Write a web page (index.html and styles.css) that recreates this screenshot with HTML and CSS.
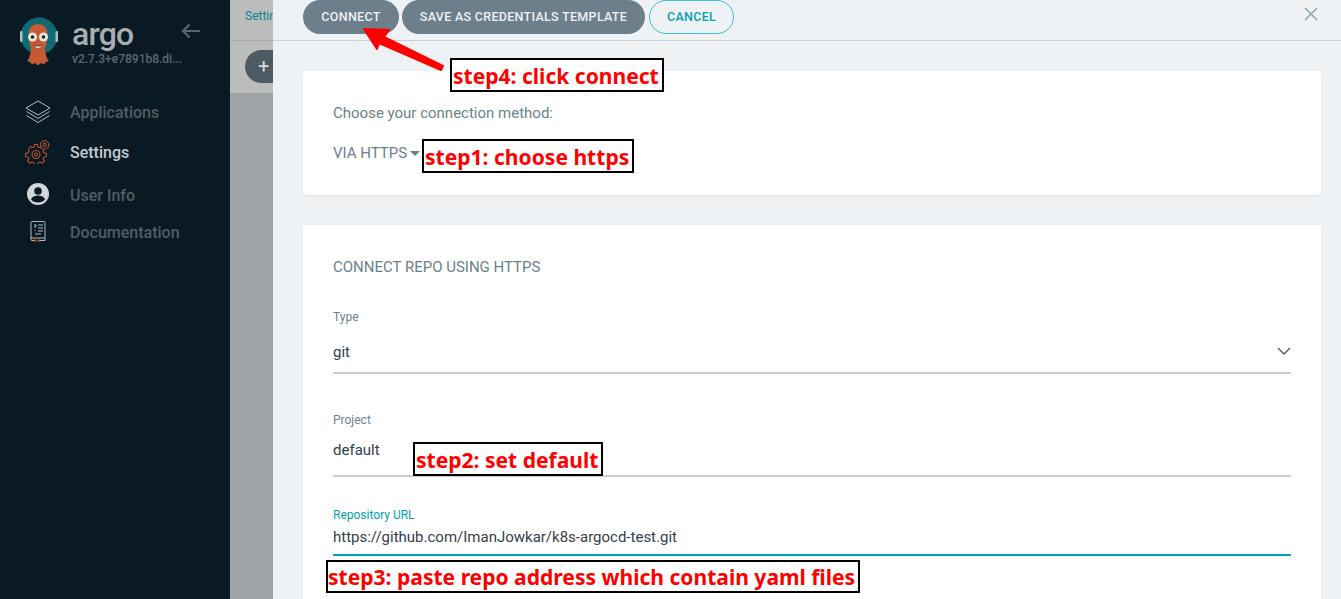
FILE: index.html
```html
<!DOCTYPE html>
<html lang="en">
<head>
<meta charset="utf-8">
<title>Argo CD - Settings</title>
<link rel="stylesheet" href="styles.css">
</head>
<body>
<div class="app">
  <aside class="sidebar">
    <div class="brand">
      <svg class="logo" width="40" height="52" viewBox="0 0 40 52">
        <circle cx="19" cy="19" r="18.500" fill="#0f6a73"/>
        <rect x="0" y="14" width="2.500" height="11" rx="1" fill="#a9c0c6"/>
        <rect x="35.500" y="14" width="2.500" height="11" rx="1" fill="#a9c0c6"/>
        <path d="M8.500 17C8.500 11 12.500 7 18 7s9.500 4 9.500 10c0 6-1.500 11-2.500 15 .5 6 2 10 4 12l-3 1-2 2.500-3-1.500-3 2.500-3-2.500-3 1.500-2-2.500-3-1c2-2 3.500-6 4-12-1-4-2.500-9-2.500-15z" fill="#c65a35"/>
        <circle cx="12.500" cy="20" r="4.500" fill="#e8e6df"/>
        <circle cx="23.500" cy="20" r="4.500" fill="#e8e6df"/>
        <circle cx="12.500" cy="20" r="1.800" fill="#222"/>
        <circle cx="23.500" cy="20" r="1.800" fill="#222"/>
        <path d="M14 28q4 2.500 8 0-1 3.500-4 3.500t-4-3.500z" fill="#f4efe6" stroke="#3a1c10" stroke-width=".6"/>
      </svg>
      <div class="brand-text">
        <div class="brand-name">argo</div>
        <div class="brand-version">v2.7.3+e7891b8.di...</div>
      </div>
      <svg class="collapse" width="20" height="16" viewBox="0 0 20 16"><path d="M19 8H2M8.500 1.500 2 8l6.500 6.500" fill="none" stroke="#5d666d" stroke-width="2.200"/></svg>
    </div>
    <nav class="nav">
      <a class="nav-item nav-apps">
        <svg class="nav-icon" width="26" height="24" viewBox="0 0 26 24" fill="none" stroke="#a9bcc6" stroke-width="1"><path d="M13 1 25 8 13 15 1 8z"/><path d="M1.500 11.500 13 18.500l11.500-7"/><path d="M1.500 15.500 13 22.500l11.500-7"/></svg>
        <span>Applications</span>
      </a>
      <a class="nav-item nav-settings active">
        <svg class="nav-icon" width="26" height="24" viewBox="0 0 26 24" fill="none" stroke="#b9502c" stroke-width="1.100"><path d="M9.500 4.500h3l.6 2.400 1.900.9 2.200-1.200 2.100 2.100-1.200 2.200.8 1.900 2.500.7v3l-2.500.6-.8 1.900 1.200 2.200-2.100 2.100-2.200-1.200-1.900.8-.6 1.600h-3l-.6-1.600-1.900-.8-2.200 1.200-2.100-2.100 1.200-2.200-.8-1.900-2.500-.6v-3l2.500-.7.8-1.900L3.800 8.600l2.100-2.100 2.200 1.200 1-.9z"/><circle cx="11" cy="14.500" r="4"/><circle cx="11" cy="14.500" r="1.500"/><circle cx="19.500" cy="5" r="4.200" fill="#0a1a25"/><circle cx="19.500" cy="5" r="1.600"/></svg>
        <span>Settings</span>
      </a>
      <a class="nav-item nav-user">
        <svg class="nav-icon" width="26" height="24" viewBox="0 0 26 24"><circle cx="13" cy="11" r="11" fill="#d3d6d8"/><circle cx="13" cy="8" r="3.800" fill="#0a1a25"/><path d="M6 16.500c1-3 4-4 7-4s6 1 7 4c-1.500 2-4 3-7 3s-5.500-1-7-3z" fill="#0a1a25"/></svg>
        <span>User Info</span>
      </a>
      <a class="nav-item nav-docs">
        <svg class="nav-icon" width="26" height="24" viewBox="0 0 26 24" fill="none" stroke="#a9bcc6" stroke-width="1"><path d="M7 1.500h12a1 1 0 0 1 1 1V18H7a1 1 0 0 1-1-1V2.500a1 1 0 0 1 1-1z"/><path d="M6 17v2.500a1 1 0 0 0 1 1h3M20 18v2.500h-6"/><path d="M10 21.500v-3h4v3l-2-1z" stroke="#b9502c"/><path d="M9 5h2v1.500h-1V8M10 10v1M13 5h5M13 8h5M13 11h5M10 14h6"/></svg>
        <span>Documentation</span>
      </a>
    </nav>
  </aside>

  <div class="behind">
    <div class="crumbs"><span class="crumb-link">Settings</span></div>
    <div class="toolbar"><span class="add-btn">+</span></div>
  </div>

  <section class="panel">
    <header class="panel-head">
      <button class="btn btn-solid">CONNECT</button>
      <button class="btn btn-solid">SAVE AS CREDENTIALS TEMPLATE</button>
      <button class="btn btn-outline">CANCEL</button>
      <svg class="close" width="16" height="16" viewBox="0 0 16 16"><path d="M2 2l12 12M14 2 2 14" stroke="#8fa4b1" stroke-width="1.500" fill="none"/></svg>
    </header>
    <div class="panel-body">
      <div class="card card-method">
        <p class="method-label">Choose your connection method:</p>
        <div class="method-value">VIA HTTPS <i class="caret"></i></div>
      </div>
      <div class="card card-form">
        <h2 class="form-title">CONNECT REPO USING HTTPS</h2>
        <div class="field field-type">
          <label class="field-label">Type</label>
          <div class="field-value">git
            <svg class="chevron" width="14" height="8" viewBox="0 0 14 8"><path d="M1 1l6 6 6-6" fill="none" stroke="#495763" stroke-width="1.300"/></svg>
          </div>
        </div>
        <div class="field field-project">
          <label class="field-label">Project</label>
          <div class="field-value">default</div>
        </div>
        <div class="field field-url">
          <label class="field-label">Repository URL</label>
          <div class="field-value">https://github.com/ImanJowkar/k8s-argocd-test.git</div>
        </div>
      </div>
    </div>
  </section>

  <div class="note note-4">step4: click connect</div>
  <div class="note note-1">step1: choose https</div>
  <div class="note note-2">step2: set default</div>
  <div class="note note-3">step3: paste repo address which contain yaml files</div>
  <svg class="arrow" width="90" height="50" viewBox="0 0 90 50">
    <path d="M4 4 29 5 24 12 83 41 81 45 19 18 17 24z" fill="#f00" stroke="#f00" stroke-width="2" stroke-linejoin="round"/>
  </svg>
</div>
</body>
</html>
```
FILE: styles.css
```css
* { box-sizing: border-box; }
html, body { margin: 0; height: 100%; overflow: hidden; }
body { font-family: Roboto, "Liberation Sans", sans-serif; color: #363c4a; }

.app { display: flex; position: relative; width: 1341px; height: 599px; overflow: hidden; }

.sidebar { width: 230px; flex: none; background: #0a1a25; }
.brand { display: flex; height: 88px; padding: 17px 0 0 20px; }
.logo { flex: none; }
.brand-text { margin-left: 12px; width: 109px; }
.brand-name { font-size: 32px; font-weight: 500; line-height: 30px; height: 33px; color: #a9adb0; letter-spacing: -.8px; margin-top: 2px; }
.brand-version { font-size: 12px; line-height: 14px; font-weight: 500; color: #5f686f; white-space: nowrap; }
.collapse { margin: 6px 0 0 0; flex: none; }

.nav { display: flex; flex-direction: column; }
.nav-item { display: flex; align-items: center; padding-left: 25px; font-size: 16px; font-weight: 500; color: #535c63; }
.nav-icon { flex: none; margin-right: 19px; }
.nav-apps { height: 24px; margin-top: 12px; }
.nav-settings { height: 24px; margin-top: 16px; }
.nav-user { height: 24px; margin-top: 19px; }
.nav-docs { height: 24px; margin-top: 13px; }
.active { color: #c3cad0; }

.behind { width: 43px; flex: none; background: #9ea3a6; }
.crumbs { height: 41px; background: #bbbdbd; border-bottom: 1px solid #a9acad; padding: 9px 0 0 15px; font-size: 12px; width: 43px; overflow: hidden; white-space: nowrap; }
.crumb-link { color: #0b7f8d; }
.toolbar { height: 52px; background: #bbbdbd; padding: 9px 0 0 15px; overflow: hidden; }
.add-btn { display: block; width: 60px; height: 33px; border-radius: 17px; background: #4c5a63; color: #d7dadc; font-size: 20px; line-height: 32px; padding-left: 13px; }

.panel { flex: 1; background: #eff2f5; display: flex; flex-direction: column; min-width: 0; }
.panel-head { display: flex; flex: none; align-items: flex-start; gap: 3px; height: 41px; padding-left: 30px; border-bottom: 1px solid #ccd1d5; position: relative; }
.btn { height: 34px; border-radius: 17px; font-family: Roboto, sans-serif; font-size: 12.500px; font-weight: 500; letter-spacing: .3px; padding: 0 0 2px; }
.btn-solid { background: #6d7f8b; border: 0; color: #eef1f3; }
.btn-solid:nth-child(1) { width: 96px; }
.btn-solid:nth-child(2) { width: 243px; }
.btn-outline { width: 85px; background: #fff0; border: 1px solid #3cc0d2; color: #00a2b3; margin-left: 1px; }
.close { position: absolute; right: 22px; top: 6px; }

.panel-body { flex: none; padding: 30px 20px 0 30px; }
.card { background: #fff; border-radius: 3px; box-shadow: 0 1px 2px rgba(0, 0, 0, .08); padding: 0 30px; }
.card-method { height: 124px; padding-top: 34px; margin-bottom: 30px; }
.method-label { margin: 0; font-size: 15px; line-height: 16px; color: #6d7f8b; }
.method-value { margin-top: 24px; font-size: 15px; line-height: 16px; color: #6d7f8b; display: flex; align-items: center; }
.caret { display: inline-block; margin-left: 3px; border: 5px solid transparent; border-top: 5px solid #6d7f8b; border-bottom: 0; }
.card-form { height: 400px; padding-top: 34px; }
.form-title { margin: 0; font-size: 15px; line-height: 16px; font-weight: 400; color: #6d7f8b; }
.field { border-bottom: 2px solid #c9cbcd; }
.field-label { display: block; font-size: 12px; line-height: 14px; color: #6d7f8b; }
.field-value { font-size: 15px; line-height: 16px; color: #363c4a; position: relative; }
.field-type { margin-top: 35px; height: 64px; }
.field-type .field-value { margin-top: 20px; }
.chevron { position: absolute; right: 0; top: 3px; }
.field-project { margin-top: 39px; height: 64px; }
.field-project .field-value { margin-top: 15px; }
.field-url { margin-top: 31px; height: 48px; border-bottom-color: #00a2b3; }
.field-url .field-label { color: #00a2b3; }
.field-url .field-value { margin-top: 7px; }

.note { position: absolute; background: #fff; border: 2px solid #000; color: #f00; font-family: "Noto Sans", "Open Sans", sans-serif; font-weight: 700; font-size: 21.050px; line-height: 32px; white-space: nowrap; padding: 0 1px; }
.note-4 { left: 450px; top: 58px; width: 214px; height: 34px; }
.note-1 { left: 422px; top: 139px; width: 212px; height: 34px; }
.note-2 { left: 413px; top: 442px; width: 190px; height: 34px; }
.note-3 { left: 326px; top: 560px; width: 534px; height: 33px; padding-left: 0; line-height: 30px; }
.arrow { position: absolute; left: 360px; top: 25px; }
```
